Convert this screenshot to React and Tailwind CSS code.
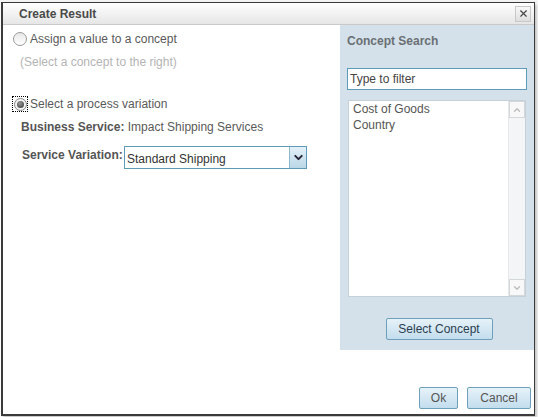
import { ChevronDown, ChevronUp, X } from "lucide-react";

const font = { fontFamily: '"Liberation Sans", Arial, sans-serif' };

export default function App() {
  return (
    <div
      className="relative w-[538px] h-[417px] overflow-hidden bg-white text-[12px] text-[#555]"
      style={font}
    >
      {/* background page peeking above the dialog */}
      <div className="absolute top-0 left-0 right-0 h-[3px] bg-[#f4f4f4]" />

      <div className="absolute left-[1px] top-[2px] w-[534px] h-[414px] flex flex-col bg-white border border-[#3b3b3b] border-l-2 border-b-2 shadow-[2px_2px_3px_rgba(0,0,0,0.25)]">
        {/* title bar */}
        <div className="h-[22px] shrink-0 flex items-center justify-between pl-[16px] pr-[3px] bg-gradient-to-b from-white to-[#e6e6e6] border-b border-[#c9c9c9]">
          <span className="font-bold text-[12px] text-[#4a4a4a]">Create Result</span>
          <button className="w-[16px] h-[16px] flex items-center justify-center border border-[#c8c8c8] bg-gradient-to-b from-[#f8f8f8] to-[#dedede]">
            <X size={11} strokeWidth={2.5} className="text-[#444]" />
          </button>
        </div>

        <div className="flex flex-1 min-h-0">
          {/* left content */}
          <div className="w-[337px] flex flex-col">
            <label className="flex items-center mt-[5px] ml-[10px] gap-[3px]">
              <span className="w-[14px] h-[14px] rounded-full border border-[#9a9a9a] bg-gradient-to-b from-[#e8e8e8] to-white" />
              <span className="text-[12px] text-[#5a5a5a]">Assign a value to a concept</span>
            </label>
            <div className="ml-[17px] mt-[5px] text-[#b4b4b4]">(Select a concept to the right)</div>

            <label className="flex items-center mt-[24px] ml-[9px] gap-[2px]">
              <span className="w-[16px] h-[16px] flex items-center justify-center border border-dotted border-black">
                <span className="w-[13px] h-[13px] rounded-full border border-[#8a8a8a] bg-[#f2f2f2] flex items-center justify-center">
                  <span className="w-[7px] h-[7px] rounded-full bg-[radial-gradient(circle_at_40%_35%,#9a9a9a,#333)]" />
                </span>
              </span>
              <span className="text-[12px] text-[#5a5a5a]">Select a process variation</span>
            </label>

            <div className="ml-[18px] mt-[5px]">
              <span className="font-bold text-[#555]">Business Service:</span>{" "}
              <span className="text-[#5a5a5a]">Impact Shipping Services</span>
            </div>

            <div className="flex items-center ml-[19px] mt-[10px]">
              <span className="font-bold text-[#555] w-[102px] -mt-[5px]">Service Variation:</span>
              <div className="w-[183px] h-[23px] flex border border-[#5d9bb8] bg-white">
                <span className="flex-1 pl-[2px] pt-[3px] text-[#333]">Standard Shipping</span>
                <span className="w-[17px] flex items-center justify-center border-l border-[#8fb8cc] bg-gradient-to-b from-[#e4f1f8] to-[#bad7e7]">
                  <ChevronDown size={13} strokeWidth={3.5} className="text-[#223]" />
                </span>
              </div>
            </div>
          </div>

          {/* right panel column */}
          <div className="flex-1 flex flex-col">
            <div className="h-[325px] bg-[#d4e1ea] flex flex-col pl-[7px] pr-[5px]">
              <div className="mt-[7px] font-bold text-[#6a6f74]">Concept Search</div>
              <input
                readOnly
                placeholder="Type to filter"
                className="mt-[18px] h-[22px] w-[180px] border border-[#5d9bb8] bg-white px-[2px] text-[12px] text-[#444] placeholder:text-[#444] outline-none"
                style={font}
              />
              <div className="mt-[10px] ml-[1px] w-[178px] h-[197px] flex border border-[#c5d0d8] bg-white">
                <div className="flex-1 pl-[4px] pt-[0px] leading-[16px] text-[#555]">
                  <div>Cost of Goods</div>
                  <div>Country</div>
                </div>
                <div className="w-[17px] flex flex-col bg-[#f3f5f6] border-l border-[#e4e8ea]">
                  <span className="h-[17px] flex items-center justify-center border border-[#d3d8db] bg-[#f8f8f8]">
                    <ChevronUp size={10} strokeWidth={3} className="text-[#bbb]" />
                  </span>
                  <span className="flex-1" />
                  <span className="h-[17px] flex items-center justify-center border border-[#d3d8db] bg-[#f8f8f8]">
                    <ChevronDown size={10} strokeWidth={3} className="text-[#bbb]" />
                  </span>
                </div>
              </div>
              <div className="flex justify-center mt-[21px] pl-[2px]">
                <button className="h-[22px] w-[107px] rounded-[2px] border border-[#6e9fbb] bg-gradient-to-b from-[#e6f2f9] to-[#c3dded] text-[12px] text-[#2c3e50]">
                  Select Concept
                </button>
              </div>
            </div>
          </div>
        </div>

        {/* footer buttons */}
        <div className="flex justify-end gap-[9px] pr-[3px] pb-[5px]">
          <button className="h-[22px] w-[39px] rounded-[2px] border border-[#6e9fbb] bg-gradient-to-b from-[#e6f2f9] to-[#c3dded] text-[12px] text-[#555]">
            Ok
          </button>
          <button className="h-[22px] w-[64px] rounded-[2px] border border-[#6e9fbb] bg-gradient-to-b from-[#e6f2f9] to-[#c3dded] text-[12px] text-[#555]">
            Cancel
          </button>
        </div>
      </div>
    </div>
  );
}
